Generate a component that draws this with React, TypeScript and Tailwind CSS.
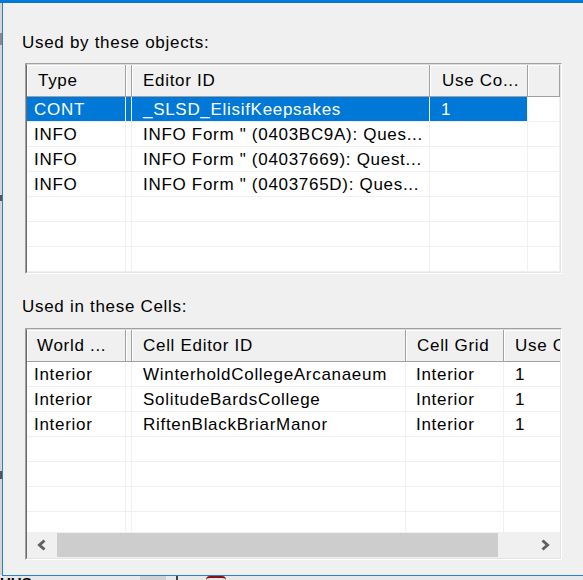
import React from "react";

type Col = { label: string; w: number | null; hpl: number; dpl: number };

const objCols: Col[] = [
  { label: "Type", w: 99, hpl: 11, dpl: 7 },
  { label: "", w: 6, hpl: 0, dpl: 0 },
  { label: "Editor ID", w: 298, hpl: 11, dpl: 11 },
  { label: "Use Co...", w: 98, hpl: 12, dpl: 11 },
  { label: "", w: null, hpl: 0, dpl: 0 },
];

const objRows: string[][] = [
  ["CONT", "", "_SLSD_ElisifKeepsakes", "1", ""],
  ["INFO", "", 'INFO Form " (0403BC9A): Ques...', "", ""],
  ["INFO", "", 'INFO Form " (04037669): Quest...', "", ""],
  ["INFO", "", 'INFO Form " (0403765D): Ques...', "", ""],
  ["", "", "", "", ""],
  ["", "", "", "", ""],
  ["", "", "", "", ""],
];

const cellCols: Col[] = [
  { label: "World ...", w: 99, hpl: 10, dpl: 7 },
  { label: "", w: 6, hpl: 0, dpl: 0 },
  { label: "Cell Editor ID", w: 274, hpl: 11, dpl: 11 },
  { label: "Cell Grid", w: 98, hpl: 11, dpl: 10 },
  { label: "Use Count", w: 110, hpl: 11, dpl: 11 },
];

const cellRows: string[][] = [
  ["Interior", "", "WinterholdCollegeArcanaeum", "Interior", "1"],
  ["Interior", "", "SolitudeBardsCollege", "Interior", "1"],
  ["Interior", "", "RiftenBlackBriarManor", "Interior", "1"],
  ["", "", "", "", ""],
  ["", "", "", "", ""],
  ["", "", "", "", ""],
  ["", "", "", "", ""],
];

function HeaderRow({ cols }: { cols: Col[] }) {
  return (
    <div className="flex h-[32px] shrink-0">
      {cols.map((c, i) => (
        <div
          key={i}
          style={c.w ? { width: c.w, paddingLeft: c.hpl } : { paddingLeft: c.hpl }}
          className={`${c.w ? "shrink-0" : "flex-1"} flex items-center h-full bg-[#f0f0f0] border-r border-b border-[#a0a0a0] shadow-[inset_1px_1px_0_#ffffff] whitespace-nowrap overflow-hidden`}
        >
          {c.label}
        </div>
      ))}
    </div>
  );
}

function DataRow({ cols, cells, selected }: { cols: Col[]; cells: string[]; selected?: boolean }) {
  return (
    <div className="flex h-[25px] shrink-0">
      {cols.map((c, i) => {
        const hi = selected && c.w !== null;
        return (
          <div
            key={i}
            style={c.w ? { width: c.w, paddingLeft: c.dpl } : { paddingLeft: c.dpl }}
            className={`${c.w ? "shrink-0" : "flex-1"} flex items-center pt-[2px] h-full border-r border-b border-[#f0f0f0] whitespace-nowrap overflow-hidden ${
              hi ? "bg-[#0078d7] text-white" : "bg-white text-black"
            }`}
          >
            {cells[i]}
          </div>
        );
      })}
    </div>
  );
}

function Chevron({ dir }: { dir: "left" | "right" }) {
  return (
    <svg width="12" height="14" viewBox="0 0 12 14">
      <polyline
        points={dir === "left" ? "8.5,2.5 3.5,7 8.5,11.5" : "3.5,2.5 8.5,7 3.5,11.5"}
        fill="none"
        stroke="#606060"
        strokeWidth="3"
        strokeLinejoin="miter"
      />
    </svg>
  );
}

function ListFrame({ height, children }: { height: number; children: React.ReactNode }) {
  return (
    <div
      style={{ height }}
      className="w-[537px] shrink-0 flex flex-col overflow-hidden border-t border-l border-t-[#a0a0a0] border-l-[#a0a0a0] border-r border-b border-r-white border-b-white"
    >
      <div className="flex-1 min-h-0 flex flex-col overflow-hidden bg-white border-t border-l border-t-[#dcdcdc] border-l-[#696969] border-r border-b border-r-[#e3e3e3] border-b-[#e3e3e3]">
        {children}
      </div>
    </div>
  );
}

export default function App() {
  return (
    <div className="w-[583px] h-[580px] overflow-hidden flex flex-col bg-[#f0f0f0] text-black text-[17px] tracking-[0.7px] font-['Liberation_Sans',Arial,sans-serif]">
      {/* window title edge */}
      <div className="h-[3px] shrink-0 bg-[#0078d7]" />

      <div className="flex flex-1 min-h-0">
        {/* desktop sliver + window left border */}
        <div className="w-[2px] shrink-0 flex flex-col bg-[#d4d4d4]">
          <div className="h-[30px]" />
          <div className="h-[12px] bg-[#8a8a8a]" />
          <div className="h-[150px]" />
          <div className="h-[6px] bg-[#555]" />
          <div className="h-[270px]" />
          <div className="h-[8px] bg-[#555]" />
        </div>
        <div className="w-[1px] shrink-0 bg-[#2b7fd0]" />

        {/* dialog body */}
        <div className="flex-1 flex flex-col pl-[19px]">
          <div className="pt-[30px] leading-[20px] h-[50px]">Used by these objects:</div>
          <div className="h-[10px]" />
          <div className="pl-[3px]">
            <ListFrame height={211}>
              <HeaderRow cols={objCols} />
              <div className="flex-1 min-h-0 overflow-hidden flex flex-col">
                {objRows.map((r, i) => (
                  <DataRow key={i} cols={objCols} cells={r} selected={i === 0} />
                ))}
              </div>
            </ListFrame>
          </div>

          <div className="pt-[23px] leading-[20px] h-[43px]">Used in these Cells:</div>
          <div className="h-[11px]" />
          <div className="pl-[3px]">
            <ListFrame height={232}>
              <HeaderRow cols={cellCols} />
              <div className="flex-1 min-h-0 overflow-hidden flex flex-col">
                {cellRows.map((r, i) => (
                  <DataRow key={i} cols={cellCols} cells={r} />
                ))}
              </div>
              {/* horizontal scroll bar */}
              <div className="h-[26px] shrink-0 flex bg-[#f0f0f0]">
                <div className="w-[30px] shrink-0 flex items-center justify-center">
                  <Chevron dir="left" />
                </div>
                <div className="w-[441px] shrink-0 my-[1px] bg-[#cdcdcd]" />
                <div className="flex-1" />
                <div className="w-[30px] shrink-0 flex items-center justify-center">
                  <Chevron dir="right" />
                </div>
              </div>
            </ListFrame>
          </div>
        </div>
      </div>

      {/* window bottom border and what lies beneath */}
      <div className="h-[1px] shrink-0 ml-[2px] bg-[#2b7fd0]" />
      <div className="h-[4px] shrink-0 flex bg-[#e8e8e8] overflow-hidden">
        <div className="w-[36px] h-[4px] overflow-hidden relative">
          <div className="absolute left-[0px] top-[-1px] text-[15px] leading-[15px] font-bold tracking-normal">UUS</div>
        </div>
        <div className="w-[104px]" />
        <div className="w-[26px] bg-[#d0d0d0]" />
        <div className="w-[10px]" />
        <div className="w-[2px] bg-[#404040]" />
        <div className="w-[28px]" />
        <div className="w-[20px] rounded-t-full border-t-2 border-[#8b1010]" />
      </div>
    </div>
  );
}
